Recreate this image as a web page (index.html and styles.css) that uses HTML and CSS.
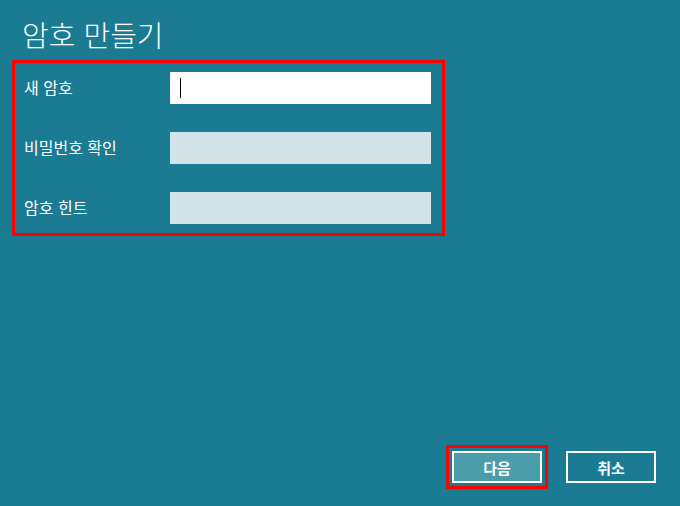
FILE: index.html
```html
<!DOCTYPE html>
<html lang="ko">

<head>
    <meta charset="UTF-8">
    <link rel="stylesheet" href="styles.css">
    <title>암호 만들기</title>
</head>

<body>
    <div class="pagina">
        <!-- Titulo -->
        <h1 class="titulo">암호 만들기</h1>
        <!-- Formulario con marco rojo -->
        <div class="marco">
            <div class="fila">
                <label class="etiqueta">새 암호</label>
                <div class="campo activo"><span class="cursor"></span></div>
            </div>
            <div class="fila">
                <label class="etiqueta">비밀번호 확인</label>
                <div class="campo"></div>
            </div>
            <div class="fila">
                <label class="etiqueta">암호 힌트</label>
                <div class="campo"></div>
            </div>
        </div>
        <!-- Botones -->
        <div class="botones">
            <div class="marcoBoton">
                <button class="boton siguiente">다음</button>
            </div>
            <button class="boton">취소</button>
        </div>
    </div>
</body>

</html>
```

FILE: styles.css
```css
html,
body {
    margin: 0px;
    padding: 0px;
    background-color: #1a7b93;
}

.pagina {
    width: 680px;
    height: 506px;
    display: flex;
    flex-direction: column;
    font-family: "Noto Sans CJK KR", "Noto Sans", sans-serif;
    color: #fff;
    box-sizing: border-box;
}

.titulo {
    margin: 0px;
    padding: 14px 0px 0px 22px;
    height: 46px;
    font-size: 29px;
    font-weight: 300;
    line-height: 40px;
}

.marco {
    width: 433px;
    height: 176px;
    margin-left: 12px;
    border: 3px solid #ff0000;
    box-sizing: border-box;
    padding: 9px 11px 9px 9px;
    display: flex;
    flex-direction: column;
    gap: 28px;
}

.fila {
    display: flex;
    align-items: center;
    height: 32px;
}

.etiqueta {
    width: 146px;
    flex-shrink: 0;
    font-size: 16px;
    line-height: 20px;
    margin-top: -2px;
}

.campo {
    width: 261px;
    height: 32px;
    background-color: #d1e3e9;
    position: relative;
}

.activo {
    background-color: #fff;
}

.cursor {
    position: absolute;
    left: 10px;
    top: 6px;
    width: 1px;
    height: 20px;
    background-color: #000;
}

.botones {
    margin-top: auto;
    padding: 0px 0px 17px 446px;
    display: flex;
    align-items: center;
    gap: 18px;
}

.marcoBoton {
    border: 3px solid #ff0000;
    padding: 3px;
}

.boton {
    width: 90px;
    height: 32px;
    border: 2px solid #fff;
    background-color: transparent;
    color: #fff;
    font-family: "Noto Sans CJK KR", sans-serif;
    font-size: 15px;
    font-weight: bold;
    padding: 0px;
    box-sizing: border-box;
    display: block;
}

.siguiente {
    background-color: #4b9caa;
}
```
